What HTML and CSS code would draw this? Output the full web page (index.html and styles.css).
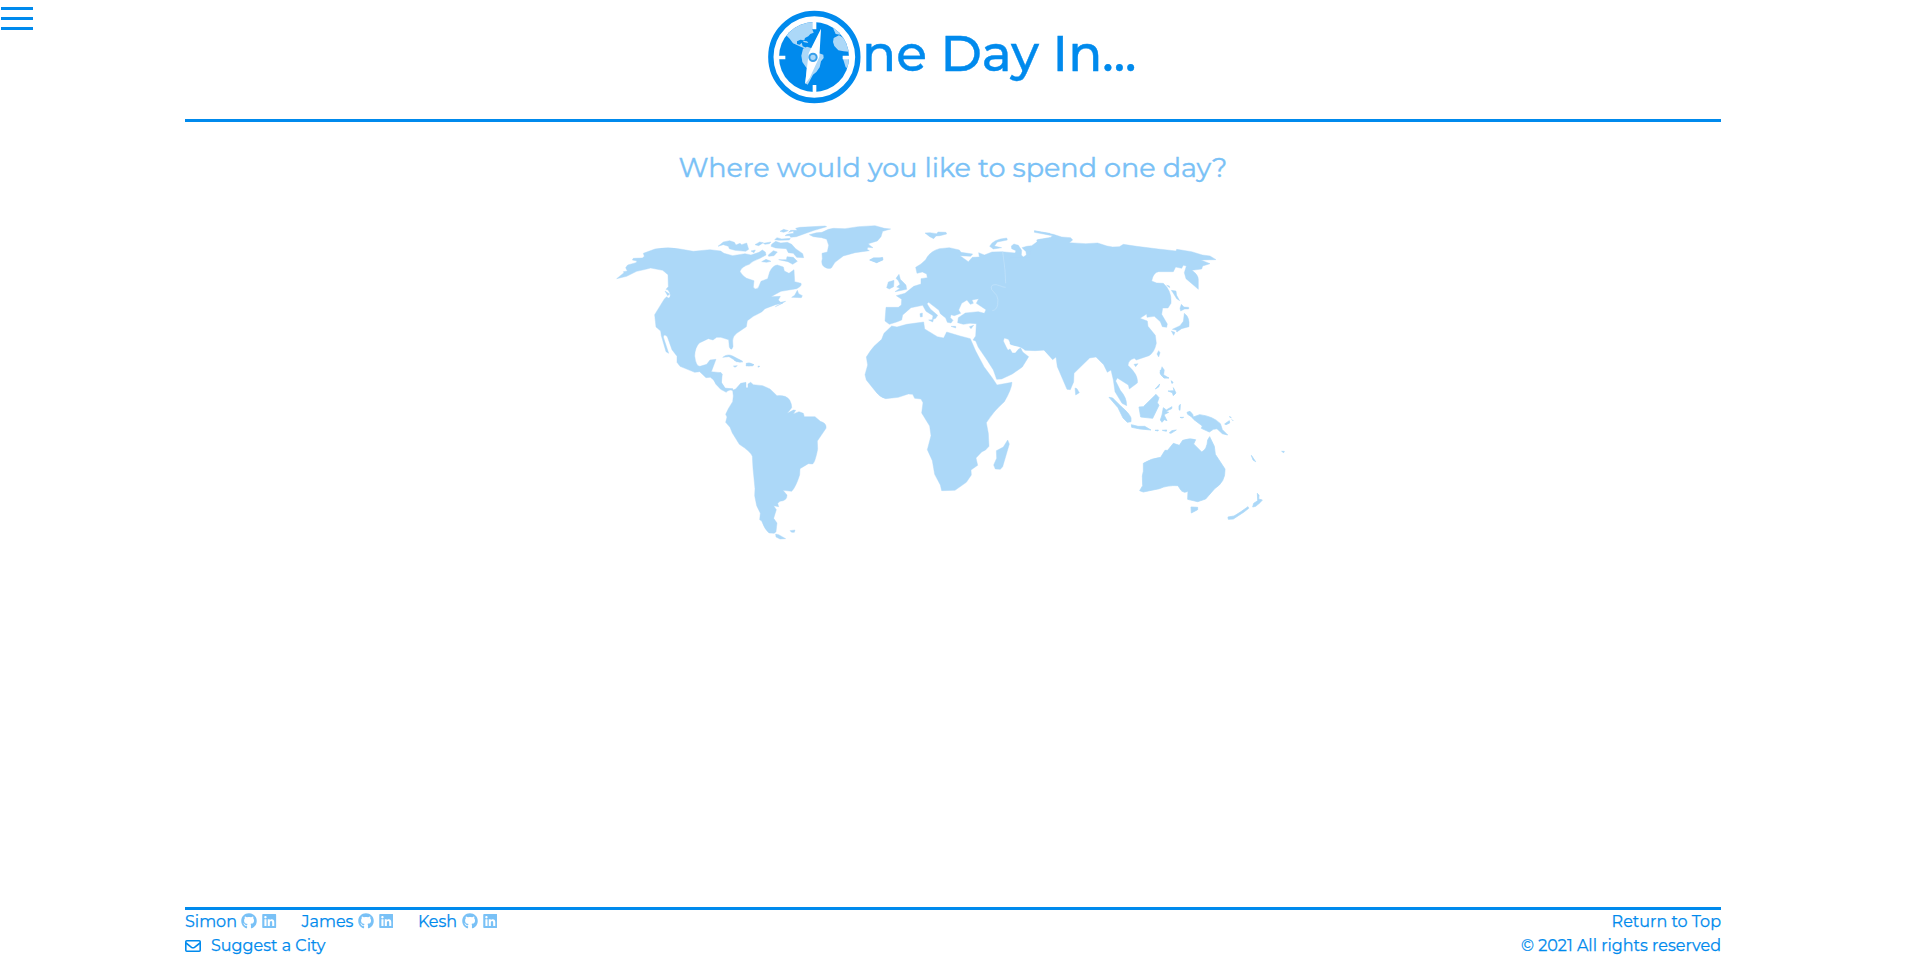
FILE: index.html
```html
<!DOCTYPE html>
<html lang="en">
<head>
<meta charset="utf-8">
<title>One Day In...</title>
<link rel="stylesheet" href="styles.css">
</head>
<body>
<svg class="defs" width="0" height="0" aria-hidden="true">
  <symbol id="github" viewBox="0 0 496 512"><path d="M165.900 397.400c0 2-2.300 3.600-5.200 3.600-3.300.3-5.600-1.300-5.600-3.600 0-2 2.300-3.600 5.200-3.600 3-.3 5.600 1.300 5.600 3.600zM244.800 8C106.100 8 0 113.300 0 252c0 110.900 69.800 205.800 169.500 239.200 12.800 2.300 17.300-5.600 17.300-12.100 0-6.200-.3-40.400-.3-61.400 0 0-70 15-84.700-29.800 0 0-11.400-29.100-27.800-36.600 0 0-22.900-15.700 1.600-15.400 0 0 24.900 2 38.600 25.800 21.900 38.600 58.600 27.500 72.900 20.900 2.300-16 8.800-27.100 16-33.700-55.900-6.200-112.300-14.300-112.300-110.500 0-27.500 7.600-41.300 23.600-58.900-2.600-6.500-11.100-33.300 2.600-67.900 20.900-6.500 69 27 69 27 20-5.600 41.500-8.500 62.800-8.500s42.800 2.900 62.800 8.500c0 0 48.100-33.600 69-27 13.700 34.700 5.200 61.400 2.600 67.900 16 17.700 25.800 31.500 25.800 58.900 0 96.500-58.900 104.200-114.800 110.500 9.200 7.900 17 22.900 17 46.400 0 33.700-.3 75.400-.3 83.600 0 6.500 4.600 14.400 17.300 12.100C428.200 457.800 496 362.900 496 252 496 113.300 383.500 8 244.800 8z"/></symbol>
  <symbol id="linkedin" viewBox="0 0 448 512"><path d="M416 32H31.900C14.300 32 0 46.500 0 64.300v383.400C0 465.500 14.300 480 31.900 480H416c17.600 0 32-14.500 32-32.300V64.300c0-17.800-14.400-32.300-32-32.300zM135.400 416H69V202.200h66.500V416zm-33.200-243c-21.300 0-38.500-17.300-38.500-38.500S80.900 96 102.200 96c21.200 0 38.500 17.300 38.500 38.500 0 21.300-17.200 38.500-38.500 38.500zm282.100 243h-66.400V312c0-24.800-.5-56.700-34.500-56.700-34.600 0-39.900 27-39.900 54.900V416h-66.400V202.200h63.700v29.200h.9c8.900-16.800 30.600-34.500 62.900-34.500 67.200 0 79.700 44.300 79.700 101.900V416z"/></symbol>
</svg>

<button class="menu" aria-label="Menu"><span></span><span></span><span></span></button>

<div class="page">
  <header class="header">
    <svg class="logo" viewBox="0 0 300 294" role="img" aria-label="O">
      <circle class="ring" cx="148" cy="147" r="130.500"/>
      <clipPath id="globe"><circle cx="147" cy="147" r="105"/></clipPath>
      <g clip-path="url(#globe)">
        <rect class="sea" width="300" height="294"/>
        <path class="land" d="M62 80L78 58 112 45 148 40 150 58 142 64 146 74 136 78 130 85 120 90 118 97 106 95 96 100 96 108 104 110 110 104 113 115 124 119 116 120 102 114 84 106 74 92ZM112 98L126 100 130 105 118 103ZM204 60L222 66 235 60 258 92 238 90 226 80 212 78ZM206 90L222 82 240 92 256 108 256 132 236 130 220 127 208 114 204 102ZM234 152L256 152 254 184 242 178ZM114 122L126 116 150 124 158 134 175 140 176 150 168 160 164 178 154 192 144 200 128 230 121 226 125 181 112 162 109 143Z"/>
      </g>
      <path class="white" d="M143 36h11v28h-11zM143 231h11v29h-11zM38 143h23v11H38zM233 143h23v11h-23z"/>
      <path class="white" d="M168 62L163 147 134 210 120 228 123 205 131 136Z"/>
      <circle class="hub" cx="144" cy="148" r="11"/>
    </svg>
    <h1 class="title">ne Day In...</h1>
  </header>

  <main class="main">
    <h2 class="question">Where would you like to spend one day?</h2>
    <svg class="map" viewBox="600 210 700 340" role="img" aria-label="World map">
      <g transform="translate(600 210) scale(.33333)">
        <path d="M50 206L72 188 70 185 82 183 77 173 83 165 108 158 111 153 97 150 100 145 127 144 133 139 130 130 165 117Q205 110 240 117L280 124 330 119 362 123 372 130 398 137 435 131 453 135 477 127 487 120 496 126 498 135 480 145Q455 154 448 163 425 170 420 184 425 196 440 205L462 212 460 232Q466 241 475 233L483 214 503 206 509 186Q518 166 532 165L550 171 553 183 567 190 582 179 584 215 603 220Q607 228 590 236L543 244 513 260 541 259 535 270 542 277 557 274 526 290 549 279 527 284 495 296 485 306 460 319 442 332 439 350 410 370Q398 380 398 392L399 410Q394 425 388 411L386 389Q375 386 362 382L350 382 339 390 325 386 298 399Q285 412 284 438 288 470 300 469L320 463 330 450 348 448 334 485 363 488 364 519 374 534 398 537 382 543 360 533 341 510 331 502 318 503 299 485 284 487 240 469 231 457 231 439 216 419 202 380Q192 370 190 381L206 430 198 425 184 377 182 363 168 351 164 314 193 267 200 260Q210 270 211 255 208 240 198 238L205 230 204 194 188 181 152 174 137 178 110 184 80 199Z"/>
        <path d="M354 109L370 96 389 92 403 97 408 105 420 100 425 104 440 99 446 118 437 124 405 121 388 116 385 109 370 104ZM465 104L479 96 490 98 476 107ZM453 123L466 120 462 128ZM490 100L513 96 508 101 495 103ZM505 135L520 122 532 126 522 137 506 139ZM515 103L527 94 542 99 562 97 575 103 587 116 608 131 611 143 590 142 580 130 565 128 559 116 527 114 513 109ZM536 149L559 149 561 140 580 142 592 154 578 163 564 155ZM485 155L498 148 513 154 500 157ZM524 89L531 83 545 87 571 85 568 90 537 91ZM540 64L551 58 565 62 551 67ZM561 73L581 70 580 63 566 67 572 61 592 61 587 55 600 52 675 48 680 50 643 61 620 69 589 80 572 82 569 77 555 77ZM628 74Q650 67 666 67L685 58 700 55 735 56 775 50 825 47 853 55 872 57 848 64 843 80 832 93 805 101 808 105 819 113 804 112 801 118 808 122 765 128 730 138 705 157 694 174Q685 179 672 170 662 162 667 146L666 130 682 126 686 106 680 88 665 83 640 80ZM809 150L820 145 829 148 848 142 849 149 830 158ZM575 262L584 256 592 241 596 251 607 257 604 263ZM368 442Q383 430 398 438L428 454 420 457 403 450 387 440ZM439 461L446 459 462 464 457 468 438 468ZM400 468L412 467 405 472ZM474 468L480 469 474 472ZM195 243L209 252 203 257Z"/>
      </g>
      <g transform="translate(680 360) scale(.33333)">
        <path d="M97 45L122 38 127 42 124 67 137 87 158 86 160 92 145 88 139 97 122 88 107 72 99 54ZM158 91L167 87 182 70 198 67 198 83 204 83 204 72 212 67 220 74 248 77 270 87 291 107Q319 105 329 120 336 134 335 143L322 160 340 150 347 151 340 162 357 155 370 160 373 170 405 170 421 184Q441 190 438 205L412 243 413 268Q405 308 398 312L385 311 360 326 359 345Q347 382 335 394L309 391 321 405Q322 422 300 424L293 430 296 440 281 437 289 449 281 475 291 489 288 515 283 520 267 519Q254 508 245 483L239 479 241 460 230 437 224 407 225 386 219 325 217 289Q212 275 178 253L157 219 150 202 137 187 141 171 137 163 145 146 158 125 160 108ZM287 522L296 524 317 536 300 537 288 531ZM330 512L345 510 343 517 335 517ZM162 0L180 0 188 6 169 5ZM198 10L210 9 222 14 205 18Z"/>
      </g>
      <g transform="translate(850 220) scale(.33333)">
        <path d="M125 318L141 321 170 313 221 306 224 327 262 350 281 354 290 336 330 348 361 356Q369 374 377 393L402 440 427 474 441 495 486 487Q485 508 463 545 430 574 409 608L415 640 417 679Q408 692 395 696L378 714 383 736 363 750 364 765 349 787 315 811 275 812 271 795 254 763 247 722 232 689 243 647 239 618 215 579 219 548 213 537 194 535 188 523 175 522 145 532 107 536Q88 532 73 510L49 480 45 464 53 435 49 411Q60 393 72 379L95 358 102 340ZM473 660L478 672 458 740 451 748 436 747 431 735 440 715 439 692 460 681ZM118 313L105 303 108 262 145 262 154 255 155 238 139 227 165 220 191 199 213 192 213 176 232 173 230 162 217 156 201 160 197 142 213 132 227 119Q240 93 268 86L298 83 328 90 333 97 368 102 362 109 330 107 355 125 367 112 388 111 386 98 403 105 426 96 456 95 495 99 498 92 485 86 484 78 492 72 505 76 515 91 514 105 520 111 529 105 528 95 516 83 530 79 545 77 562 65 560 60 600 53V408L583 390 555 392 525 391 512 379 498 377 484 373 475 358 463 354 460 363 470 384 474 391 480 387 487 399 496 399 505 388 512 384 518 396 536 410 517 441 487 462 455 477 440 478 430 450 411 420 385 382 377 363 369 360 377 348 379 311 360 310 340 313 323 308 325 293 346 279 385 275 403 280 408 269 379 250 386 236 366 240 370 250 361 253 351 240 335 250 326 270 332 280 313 287 303 284 301 293 309 301 303 309 292 307 287 294 271 281 267 271 236 247 231 251 241 267 263 286 257 295 247 299 249 287 228 274 218 256 183 263 158 285 155 300 140 306Z"/>
        <path d="M110 203L115 186 132 181 131 200 118 207ZM138 175L147 163 151 178 168 195 170 208 135 215 150 205 140 201 150 193 145 182ZM59 120L71 113 97 113 99 120 80 128ZM225 39L240 38 260 41 264 36 288 37 290 42 270 47 258 48 251 56 239 50ZM419 79Q428 58 470 54L472 60 442 66 433 78 455 83 430 87ZM552 33L600 40 600 45 580 40ZM210 281L217 279 217 290 211 291ZM236 300L250 299 248 306ZM303 319L317 319 317 324ZM358 320L371 316 363 326Z"/>
        <path class="border" d="M458 95L465 150 467 190M467 202Q460 202 449 197T428 195Q421 200 425 209L440 226Q446 238 443 254T427 272"/>
      </g>
      <g transform="translate(1010 220) scale(.33333)">
        <path d="M0 115L60 115 62 85 82 65 83 59 120 53 128 47 73 37 74 32 130 43 155 51 182 53 188 60 178 68 227 71 263 69 291 78 308 81 328 80 340 73 380 79 445 87 498 93 500 88 545 95 577 105 600 108 618 119 573 120 600 131 578 138 575 147 546 151 Q565 165 565 178L565 208 528 176 523 158 529 138 520 136 515 145 497 141 490 155 446 155Q430 157 425 183L440 189 460 190Q486 213 483 250L474 264 458 264 455 283 472 312 470 322 457 320 451 305 433 289 411 292 410 282 390 295 412 303 414 319 436 346 439 370Q433 398 417 407L379 420 373 415Q355 420 354 436 387 467 382 489L358 507 355 495 322 474 317 483 331 511Q351 534 350 557L336 550 315 515 310 480 303 450 292 457 281 434 258 411 239 414 192 460 191 486 181 509 171 508 142 440 138 411 128 419 102 390 48 389 24 379 4 374 0 372Z"/>
        <path d="M470 196L478 198 479 203ZM484 211L498 213 500 226 509 242 500 236 489 218ZM514 253L522 261 536 262 536 267 524 267 512 273 510 265ZM523 280Q540 292 537 320L515 326 506 332 487 328 510 317 520 304ZM484 333L495 337 491 346ZM498 333L506 330 502 336ZM446 392L450 398 446 411 441 402ZM372 433L384 431 377 440ZM456 440L463 450 461 464 477 474 462 474 450 458ZM484 484L489 489 486 490ZM195 504L201 506 208 518 197 525Z"/>
      </g>
      <g class="oceania" transform="translate(1090 370) scale(.33333)">
        <path d="M57 82L68 84 93 109Q118 130 123 144L123 155 112 157 99 144 84 113ZM124 164L144 169 164 169 183 180 150 177 125 172ZM195 181L205 180 204 183ZM217 181L230 180 229 184ZM238 189L245 182 259 180 243 190ZM147 111L160 110 198 73 207 83 202 98 207 106 188 145 152 141ZM196 57L209 42 206 51ZM211 0L215 17 236 24 222 24 211 12ZM244 32L249 37 246 40ZM234 63L252 62 250 53 258 69 250 77 247 68ZM220 113L229 120 246 110 245 116 227 124 236 127 222 134 231 152 223 149 216 157 211 150 216 135ZM267 119L267 108 271 103 270 121ZM270 142L281 142 276 144ZM291 127L300 124 308 133 310 141 329 134Q370 139 391 161L397 179 413 195 397 191 381 176 370 178 358 186 334 175 337 168 312 149 304 140 293 133ZM404 162L418 152 419 159 408 164ZM418 140L424 143ZM426 149L429 152ZM160 280Q184 265 212 262L225 241 233 241 250 220 268 226 278 211Q299 203 317 209L311 222 335 246Q351 239 353 210L359 200 373 229 376 253 405 297Q407 336 374 356L347 387 323 395 293 388 294 364 273 361 264 347Q232 345 208 356L160 366 149 362 158 347 157 318 160 304ZM275 363L289 354 291 365 284 367ZM303 411L323 412 323 419 304 429ZM484 256L497 275 489 270ZM575 244L583 244 581 248ZM502 370L507 376 506 387 517 390 510 398 497 409 488 411 491 400 503 392ZM474 410L476 415 462 426 430 447 415 448 414 441 432 438 450 427Z"/>
      </g>
    </svg>
  </main>

  <footer class="footer">
    <div class="row">
      <div class="people">
        <span class="person"><span>Simon</span><svg class="gh"><use href="#github"/></svg><svg class="li"><use href="#linkedin"/></svg></span>
        <span class="person"><span>James</span><svg class="gh"><use href="#github"/></svg><svg class="li"><use href="#linkedin"/></svg></span>
        <span class="person"><span>Kesh</span><svg class="gh"><use href="#github"/></svg><svg class="li"><use href="#linkedin"/></svg></span>
      </div>
      <a class="top">Return to Top</a>
    </div>
    <div class="row">
      <a class="suggest"><svg class="mail" viewBox="0 0 16 12"><rect x=".8" y=".8" width="14.400" height="10.400" rx="1"/><path d="M1 3l5.500 4.300q1.500 1 3 0L15 3"/></svg><span>Suggest a City</span></a>
      <span class="rights">© 2021 All rights reserved</span>
    </div>
  </footer>
</div>
</body>
</html>
```
FILE: styles.css
```css
* { box-sizing: border-box; }
body { margin: 0; background: #fff; color: #008aed; font-family: Montserrat, Inter, sans-serif; font-weight: 500; }
.defs { position: absolute; }
.menu { position: absolute; left: 1px; top: 7px; width: 32px; padding: 0; border: 0; background: none; display: flex; flex-direction: column; gap: 7px; }
.menu span { height: 3px; background: #008aed; }
.page { width: 1536px; height: 960px; margin: 0 auto 0 185px; display: flex; flex-direction: column; }
.header { height: 122px; border-bottom: 3px solid #008aed; padding: 8px 0 0 580px; display: flex; align-items: flex-start; }
.logo { width: 100px; height: 98px; flex: none; }
.ring { fill: #fff; stroke: #008aed; stroke-width: 16; }
.sea { fill: #008aed; }
.land { fill: #acd8f8; }
.white { fill: #fff; }
.hub { fill: #acd8f8; stroke: #389fea; stroke-width: 6; }
.title { margin: 13px 0 0 -3px; font-size: 50.200px; line-height: 64px; font-weight: 500; -webkit-text-stroke: .4px #008aed; white-space: nowrap; }
.main { flex: 1; display: flex; flex-direction: column; align-items: center; }
.question { margin: 28px 0 0; height: 36px; font-size: 27.050px; line-height: 36px; font-weight: 400; -webkit-text-stroke: .4px #79c1f6; color: #79c1f6; white-space: nowrap; }
.map { width: 700px; height: 340px; margin: 24px 0 0 -6px; fill: #acd8f8; stroke: #acd8f8; stroke-width: 1.300; stroke-linejoin: round; }
.map .oceania { stroke-width: 2.200; }
.map .border { fill: none; stroke: #c5e4fa; stroke-width: 2; }
.footer { height: 53px; border-top: 3px solid #008aed; font-size: 16px; line-height: 24px; font-weight: 400; -webkit-text-stroke: .25px #008aed; }
.row { display: flex; justify-content: space-between; height: 24px; }
.people { display: flex; gap: 24.500px; }
.person { display: flex; align-items: center; }
.person span { white-space: nowrap; }
.gh { width: 16px; height: 16px; margin: 0 5px 2px 4.500px; fill: #79c1f6; }
.li { width: 14.500px; height: 16px; margin-bottom: 2px; fill: #79c1f6; }
.suggest { display: flex; align-items: center; gap: 10px; }
.mail { width: 16px; height: 12px; fill: none; stroke: #008aed; stroke-width: 1.600; }
```
